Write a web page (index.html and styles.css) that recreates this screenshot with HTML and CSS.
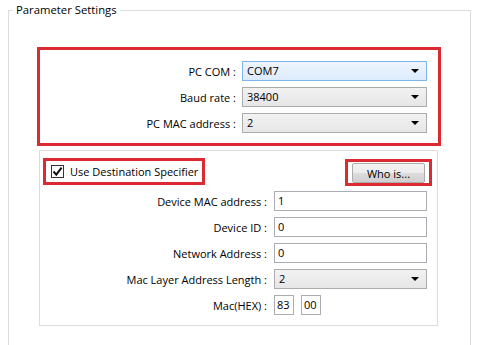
FILE: index.html
```html
<!DOCTYPE html>
<html lang="en">
<head>
    <meta charset="UTF-8">
    <meta name="viewport" content="width=device-width, initial-scale=1.0">
    <title>Parameter Settings</title>
    <link rel="stylesheet" href="styles.css">
</head>
<body>
    <fieldset class="panel">
        <legend>Parameter Settings</legend>

        <!-- PC side settings -->
        <div class="mark pc-box">
            <div class="form-grid pc-grid">
                <label>PC COM :</label>
                <div class="combo focus">COM7</div>
                <label>Baud rate :</label>
                <div class="combo">38400</div>
                <label>PC MAC address :</label>
                <div class="combo">2</div>
            </div>
        </div>

        <!-- Destination settings -->
        <div class="group">
            <div class="group-head">
                <div class="mark check-box">
                    <span class="check">
                        <svg width="11" height="11" viewBox="0 0 11 11"><path d="M1.5 5.5 L4.3 8.6 L9.6 1.6" fill="none" stroke="#111" stroke-width="2"/></svg>
                    </span>
                    <span>Use Destination Specifier</span>
                </div>
                <div class="mark btn-box">
                    <button type="button" class="who-btn">Who is...</button>
                </div>
            </div>
            <div class="form-grid dest-grid">
                <label>Device MAC address :</label>
                <div class="field">1</div>
                <label>Device ID :</label>
                <div class="field">0</div>
                <label>Network Address :</label>
                <div class="field">0</div>
                <label>Mac Layer Address Length :</label>
                <div class="combo">2</div>
                <label>Mac(HEX) :</label>
                <div class="hex-row">
                    <div class="field hex">83</div>
                    <div class="field hex">00</div>
                </div>
            </div>
        </div>
    </fieldset>
</body>
</html>
```

FILE: styles.css
```css
body {
    margin: 0;
    background: #fff;
    font-family: "Open Sans", "Noto Sans", sans-serif;
    font-size: 11px;
    color: #000;
}
.panel {
    margin: 2px 0 0 8px;
    width: 463px;
    height: 343px;
    box-sizing: border-box;
    padding: 29px 0 0 0;
    border: 1px solid #dcdcdc;
    border-bottom: 0;
    min-inline-size: 0;
}
.panel legend {
    margin-left: 4px;
    padding: 0 3px;
    line-height: 16px;
    font-size: 11.3px;
}
.mark {
    border: 3px solid #dc2a33;
}
.pc-box {
    margin-left: 28px;
    width: 404px;
    height: 99px;
    box-sizing: border-box;
    padding-top: 11px;
}
.form-grid {
    display: grid;
    align-items: center;
}
.form-grid label {
    text-align: right;
    white-space: nowrap;
}
.pc-grid {
    grid-template-columns: 196px 185px;
    column-gap: 6px;
    row-gap: 6px;
}
.combo {
    position: relative;
    height: 20px;
    box-sizing: border-box;
    padding: 0 0 0 4px;
    line-height: 18px;
    border: 1px solid #acacac;
    background: linear-gradient(#f2f2f2, #e6e6e6);
}
.combo::after {
    content: "";
    position: absolute;
    right: 7px;
    top: 7px;
    border-left: 4px solid transparent;
    border-right: 4px solid transparent;
    border-top: 4px solid #000;
}
.combo.focus {
    border-color: #7eb4ea;
    background: linear-gradient(#eef5fd, #dcecfc);
}
.group {
    margin: 4px 0 0 30px;
    width: 399px;
    height: 176px;
    box-sizing: border-box;
    border: 1px solid #dcdcdc;
}
.group-head {
    display: flex;
    justify-content: space-between;
    align-items: flex-start;
    margin: 7px 5px 0 3px;
}
.check-box {
    display: flex;
    align-items: center;
    gap: 6px;
    width: 162px;
    height: 27px;
    box-sizing: border-box;
    padding-left: 5px;
    white-space: nowrap;
}
.check {
    display: flex;
    align-items: center;
    justify-content: center;
    width: 13px;
    height: 13px;
    box-sizing: border-box;
    border: 1px solid #333;
    background: #fff;
}
.btn-box {
    margin-top: 1px;
    width: 87px;
    height: 27px;
    box-sizing: border-box;
    padding: 1px 0 0 4px;
}
.who-btn {
    width: 73px;
    height: 20px;
    padding: 0;
    font-family: inherit;
    font-size: 11px;
    color: #000;
    border: 1px solid #acacac;
    border-radius: 2px;
    background: linear-gradient(#f3f3f3 0%, #ebebeb 50%, #dddddd 51%, #cfcfcf 100%);
}
.dest-grid {
    margin-top: 5px;
    grid-template-columns: 227px 153px;
    column-gap: 7px;
    row-gap: 6px;
}
.field {
    height: 20px;
    box-sizing: border-box;
    padding-left: 3px;
    line-height: 18px;
    border: 1px solid #abadb3;
    background: #fff;
}
.hex-row {
    display: flex;
    gap: 7px;
}
.field.hex {
    width: 20px;
    padding-left: 2px;
}
```
